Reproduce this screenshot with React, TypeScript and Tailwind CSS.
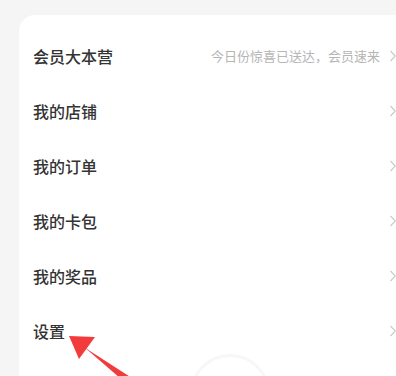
const rows = [
  { label: "会员大本营", hint: "今日份惊喜已送达，会员速来" },
  { label: "我的店铺" },
  { label: "我的订单" },
  { label: "我的卡包" },
  { label: "我的奖品" },
  { label: "设置" },
]

function Chevron() {
  return (
    <svg width="7" height="12" viewBox="0 0 7 12" className="shrink-0">
      <path d="M1.5 1 L6.3 6 L1.5 11" fill="none" stroke="#c8c8c8" strokeWidth="1.1" />
    </svg>
  )
}

export default function App() {
  return (
    <div
      className="relative h-[376px] w-[396px] overflow-hidden bg-[#f5f5f5] pl-[19px] pt-[15px]"
      style={{ fontFamily: '"Noto Sans CJK SC", "Noto Sans", sans-serif' }}
    >
      <div className="h-[400px] rounded-tl-[16px] bg-white pl-[14px] pt-[13px]">
        {rows.map((row) => (
          <div key={row.label} className="flex h-[55px] items-center">
            <span className="flex-1 text-[16px] font-medium text-[#333333]">{row.label}</span>
            {row.hint && (
              <span className="mr-[9px] text-[13px] text-[#b6b6b6]">{row.hint}</span>
            )}
            <Chevron />
          </div>
        ))}
      </div>

      {/* faint shape peeking at the bottom */}
      <div className="absolute left-[190px] top-[354px] h-[80px] w-[80px] rounded-full border-[3px] border-[#f6f8f7]" />

      {/* red annotation arrow */}
      <svg className="absolute left-0 top-0" width="396" height="376" viewBox="0 0 396 376">
        <polygon points="69,336 95,337 79,359" fill="#f23b3b" />
        <polygon points="83,346 90,351 135,380 128,385" fill="#f23b3b" />
      </svg>
    </div>
  )
}
